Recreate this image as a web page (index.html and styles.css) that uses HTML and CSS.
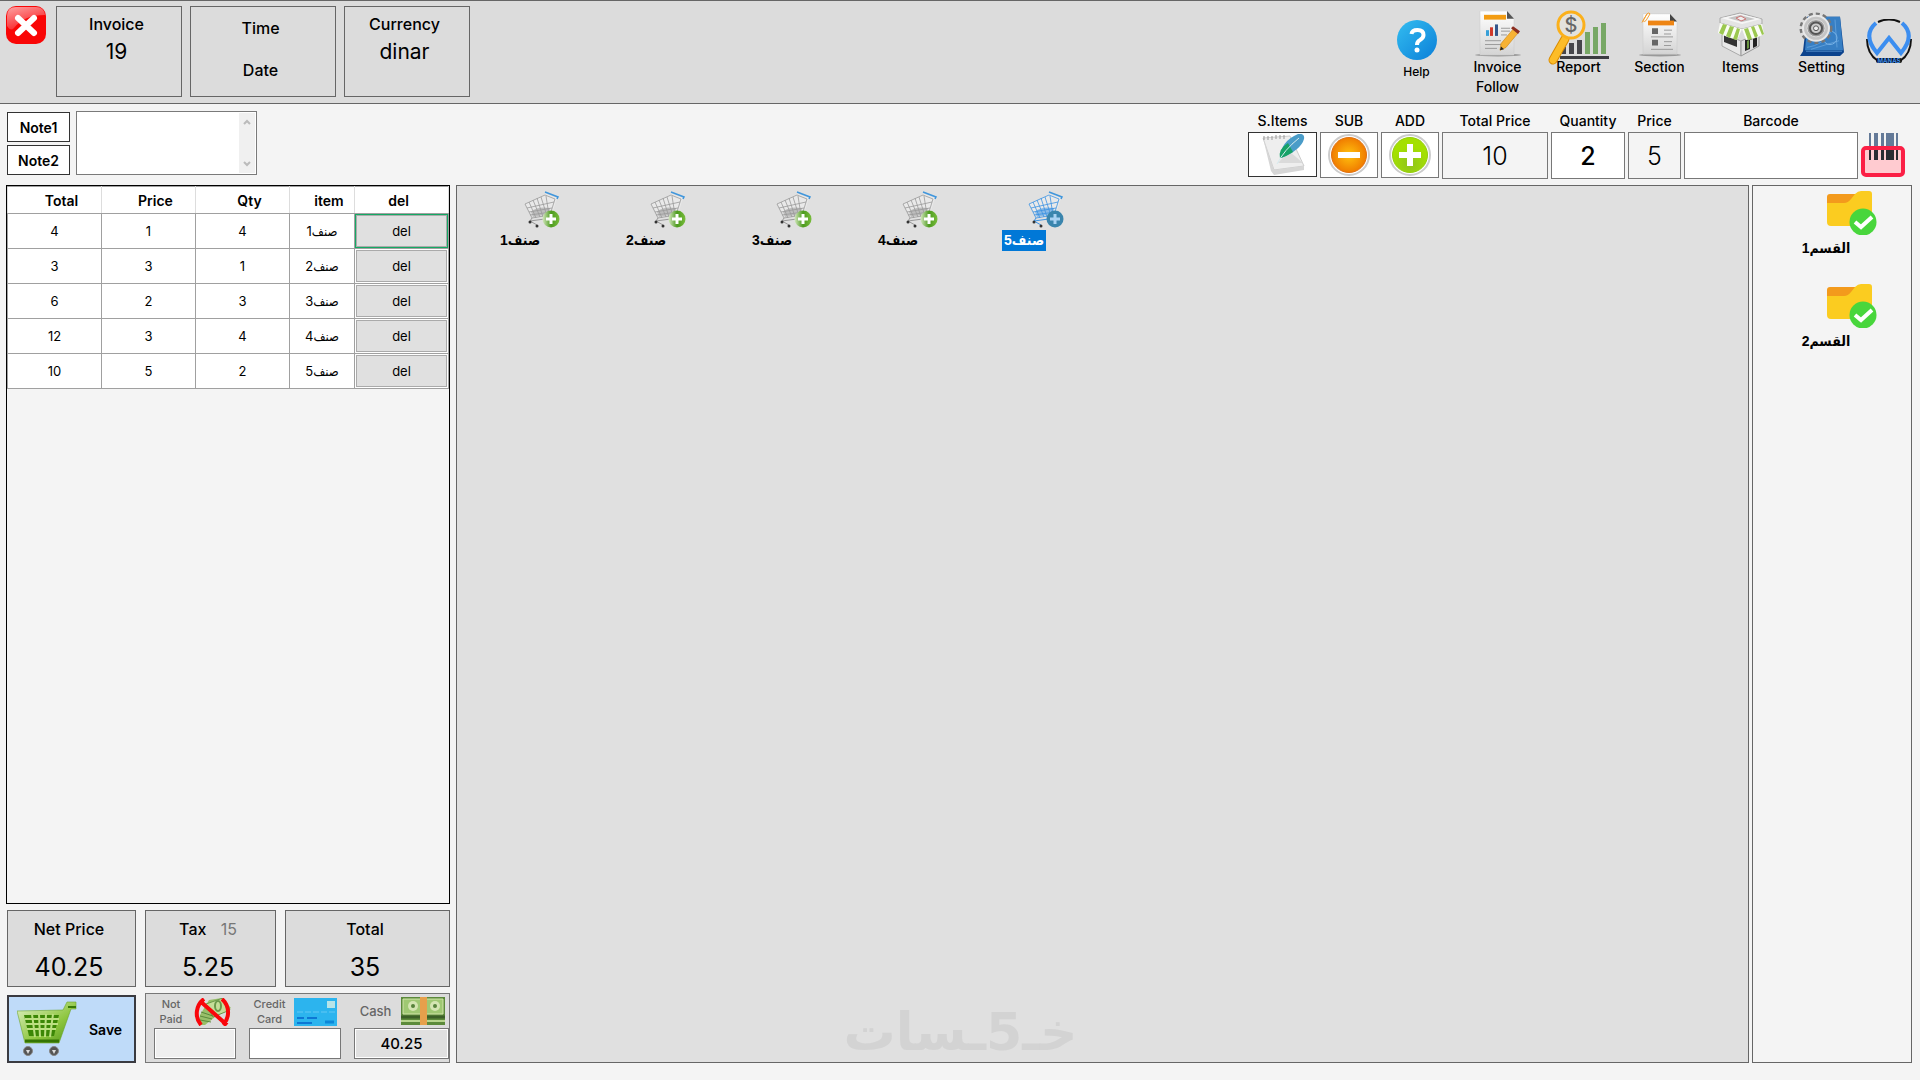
FILE: index.html
```
<!DOCTYPE html>
<html lang="en">
<head>
    <meta charset="UTF-8">
    <meta name="viewport" content="width=device-width, initial-scale=1.0">
    <title>Sales Invoice</title>
    <link rel="stylesheet" href="styles.css">
</head>
<body>
    <!-- shared gradients and icons -->
    <svg class="defs" width="0" height="0" aria-hidden="true">
        <defs>
            <linearGradient id="gloss" x1="0" y1="0" x2="0.5" y2="1">
                <stop offset="0" stop-color="#ffc9c9"/><stop offset="1" stop-color="#f8242a"/>
            </linearGradient>
            <linearGradient id="paper" x1="0" y1="0" x2="0" y2="1">
                <stop offset="0" stop-color="#fff"/><stop offset="1" stop-color="#d4d4d4"/>
            </linearGradient>
            <linearGradient id="blue" x1="0" y1="0" x2="1" y2="1">
                <stop offset="0" stop-color="#33bdf0"/><stop offset="1" stop-color="#0b7fd8"/>
            </linearGradient>
            <linearGradient id="green" x1="0" y1="0" x2="1" y2="1">
                <stop offset="0" stop-color="#e2f2c8"/><stop offset="0.6" stop-color="#8ec63f"/><stop offset="1" stop-color="#4e9416"/>
            </linearGradient>
            <linearGradient id="badge" x1="0" y1="0" x2="1" y2="0">
                <stop offset="0" stop-color="#d5e8c0"/><stop offset="0.5" stop-color="#4c9a1e"/><stop offset="1" stop-color="#79bd3c"/>
            </linearGradient>
            <radialGradient id="orangeBall"><stop offset="0" stop-color="#ffc20e"/><stop offset="1" stop-color="#f07c00"/></radialGradient>
            <radialGradient id="greenBall" cy="0.75"><stop offset="0" stop-color="#8fc31f"/><stop offset="1" stop-color="#a4e000"/></radialGradient>
            <symbol id="trolley" viewBox="0 0 36 38">
                <path d="M1 14 22 4 33 8 28 24 9 27z" fill="#fff" fill-opacity=".3"/>
                <path d="M1 14 21 5 31 9 26 25 8 28zM3 18 30 12M5 22 28 18M6 25 27 22M5 12 12 28M9 10 16 27M13 8 19 27M17 7 23 26M22 6 25 25" fill="none" stroke="currentColor" stroke-width=".8"/>
                <path d="M7 22c5-5 12-5 19-4l-1 6-16 3z" fill="currentColor" opacity=".55"/>
                <path d="M26 25 28 28 6 31M8 28 6 31 13 35" fill="none" stroke="currentColor"/>
                <circle cx="6" cy="32" r="1.5" fill="#333"/><circle cx="13" cy="36" r="1.5" fill="#333"/>
                <path d="M21 2 34 7 33 9" fill="none" stroke="#4096dc" stroke-width="1.5"/>
            </symbol>
            <symbol id="folder" viewBox="0 0 50 44">
                <path d="M0 6q0-3 3-3h25v12H0z" fill="#f39a1c"/>
                <path d="M0 12h17q4 0 7-4l4-5q3-3 6-3h8q3 0 3 3v28q0 4-4 4H4q-4 0-4-4z" fill="#fbcc20"/>
                <circle cx="36" cy="31" r="13.5" fill="#48d63c"/>
                <path d="m28 31 6 5 11-10" fill="none" stroke="#fff" stroke-width="4"/>
            </symbol>
        </defs>
    </svg>

    <header class="topbar">
        <button class="close-btn" aria-label="Close">
            <svg width="40" height="38" viewBox="0 0 40 38">
                <rect width="40" height="38" rx="10" fill="#f90606"/>
                <path d="M1 20V10Q1 1 10 1h20q8 0 9 8Q18 9 8 22q-3 4-7-2z" fill="url(#gloss)" opacity=".8"/>
                <path d="m12 12 16 15m0-15L12 27" stroke="#fff" stroke-width="6" stroke-linecap="round"/>
            </svg>
        </button>
        <div class="info-box">
            <span>Invoice</span>
            <strong>19</strong>
        </div>
        <div class="info-box info-time">
            <span>Time</span>
            <span>Date</span>
        </div>
        <div class="info-box">
            <span>Currency</span>
            <strong>dinar</strong>
        </div>

        <nav class="menu">
            <a href="#" class="menu-item menu-help">
                <svg width="40" height="40" viewBox="0 0 40 40">
                    <circle cx="20" cy="20" r="20" fill="url(#blue)"/>
                    <path d="M14.5 14q.5-4 6-4 6 0 6 5 0 3-3.500 5-3 1.500-3 5" fill="none" stroke="#fff" stroke-width="4"/>
                    <circle cx="20" cy="30" r="2.500" fill="#fff"/>
                </svg>
                Help
            </a>
            <a href="#" class="menu-item">
                <svg width="46" height="46" viewBox="0 0 46 48" preserveAspectRatio="none">
                    <ellipse cx="23" cy="46" rx="23" ry="1.500" fill="#999"/>
                    <path d="M5 0h27l7 8v38H5z" fill="url(#paper)" stroke="#ccc" stroke-width=".5"/>
                    <path d="M32 0v8h7z" fill="#555"/>
                    <path d="M9 4h22v5H9z" fill="#f39c12"/>
                    <path d="M11 20h3v6h-3z" fill="#38a0d8"/><path d="M15 17h3v9h-3z" fill="#d0392b"/><path d="M20 14h3v12h-3z" fill="#34568b"/>
                    <path d="M26 18h9M26 21h9M26 25h6M10 31h16M10 35h18M10 39h12" stroke="#999"/>
                    <path d="m26 34 12-15 5 4-12 15-6 3z" fill="#f7b234" stroke="#c98212" stroke-width=".6"/>
                    <path d="m36 18 2-2 7 5-2 3z" fill="#8b2d20"/><path d="m25 41 1-4 3 3z" fill="#222"/>
                </svg>
                Invoice Follow
            </a>
            <a href="#" class="menu-item">
                <svg width="61" height="46" viewBox="0 0 61 46" overflow="visible">
                    <path d="M12 45h49v3H12z" fill="#3d3d42"/>
                    <path d="M14 36h4v7h-4zM21 32h5v11h-5zM29 29h5v14h-5z" fill="#46464b"/>
                    <path d="M37 21h5v22h-5zM45 16h5v27h-5zM53 12h5v31h-5z" fill="#78a866"/>
                    <path d="M17 28 5 49" stroke="#d98b00" stroke-width="9" stroke-linecap="round"/>
                    <path d="M17 28 5 49" stroke="#fcbc28" stroke-width="7" stroke-linecap="round"/>
                    <circle cx="23" cy="14" r="13" fill="#e4e2dc" stroke="#fbb01b" stroke-width="3"/>
                    <text x="23" y="21" class="dollar">$</text>
                </svg>
                Report
            </a>
            <a href="#" class="menu-item">
                <svg width="42" height="46" viewBox="0 0 42 48" preserveAspectRatio="none">
                    <ellipse cx="21" cy="46" rx="21" ry="1.500" fill="#999"/>
                    <path d="M4 3h27l7 8v34H4z" fill="url(#paper)" stroke="#ccc" stroke-width=".5"/>
                    <path d="M31 3v8h7z" fill="#444"/>
                    <path d="M9 10h26v5H9z" fill="#ee8514"/>
                    <path d="M13 18h6v6h-6zM13 30h6v6h-6z" fill="#666"/>
                    <path d="M25 20h8M25 24h7M12 27h22M25 32h8M25 36h7M12 40h22" stroke="#999"/>
                    <path d="M3 12 8 3q2-2 3 0L7 10q-2 2-3 0l4-7" fill="none" stroke="#f5a030"/>
                </svg>
                Section
            </a>
            <a href="#" class="menu-item">
                <svg width="46" height="46" viewBox="0 0 46 46">
                    <path d="m4 22 19 8v15L4 35z" fill="#e8e8e8" stroke="#aaa"/>
                    <path d="m23 30 18-8v13L23 45z" fill="#ddd" stroke="#999"/>
                    <path d="m6 23 13 5v8L6 31z" fill="#333"/><path d="m27 29 12-5v11l-4 2v-9l-3 1v9l-5 2z" fill="#222"/><path d="m29 30 2-1v8l-2 1z" fill="#6a9640"/>
                    <path d="M2 7 22 2l22 6v5l-20 5L2 12z" fill="#e4e4e4" stroke="#aaa"/>
                    <path d="m3 7 19-4 21 5-19 5z" fill="#f6f6f6"/>
                    <path d="m10 7 12-3 15 4-13 3z" fill="#c4c4c4"/><path d="m18 7 5-2 5 3-5 2z" fill="#eee" stroke="#c77"/>
                    <path d="M2 12 24 18 19 29Q8 26 0 22zM24 18l20-5 2 10Q38 28 28 29z" fill="#fbfdf5"/>
                    <path d="M5 13 1 22l4 2 4-10zM12 15 8 25l4 2 4-11zM19 17l-4 11 4 1 3-11zM26 18l4 11 4-1-4-11zM33 16l4 11 3-2-4-10zM40 14l4 10 2-1-3-9z" fill="#9cc850"/>
                </svg>
                Items
            </a>
            <a href="#" class="menu-item">
                <svg width="46" height="46" viewBox="0 0 46 48" preserveAspectRatio="none">
                    <path d="M8 6h33l4 37-4 4H1l3-5z" fill="#0c438d"/>
                    <path d="M9 6h32l3 35H6z" fill="#377fc4"/>
                    <path d="M8 38q16-2 25-18M12 40l28-9M36 9l2 29M7 42h36" fill="none" stroke="#78b2e6" stroke-width=".6"/>
                    <circle cx="31" cy="28" r="7" fill="none" stroke="#78b2e6"/>
                    <circle cx="17" cy="18" r="15" fill="none" stroke="#777" stroke-width="3" stroke-dasharray="4 3"/>
                    <circle cx="17" cy="18" r="13" fill="#c4c4c4" stroke="#e8e8e8" stroke-width="2"/>
                    <circle cx="17" cy="18" r="9" fill="#999" stroke="#ddd"/>
                    <circle cx="17" cy="18" r="6" fill="#ccc" stroke="#555" stroke-width="2"/>
                    <circle cx="17" cy="18" r="2.500" fill="#eee" stroke="#555"/>
                </svg>
                Setting
            </a>
        </nav>
        <svg class="brand" width="46" height="46" viewBox="0 0 46 46" role="img" aria-label="Manas">
            <path d="M12 3q11-5 22 0M1 20q0 15 11 22M45 20q0 15-11 22" fill="none" stroke="#111" stroke-width="2"/>
            <path d="M10 4Q-4 16 11 34L23 19 35 34Q50 16 36 4" fill="none" stroke="#3c8ef0" stroke-width="4"/>
            <rect x="10" y="39" width="26" height="5" rx="2" fill="#111"/>
            <text x="23" y="44" class="brand-name">MANAS</text>
        </svg>
    </header>

    <section class="toolbar">
        <div class="notes">
            <div class="note-tabs">
                <button class="note-btn">Note1</button>
                <button class="note-btn">Note2</button>
            </div>
            <div class="note-box">
                <textarea class="note-text" aria-label="Note"></textarea>
                <span class="scrollbar">
                    <svg width="8" height="6" viewBox="0 0 8 6"><path d="m1 5 3-3 3 3"/></svg>
                    <svg width="8" height="6" viewBox="0 0 8 6"><path d="m1 1 3 3 3-3"/></svg>
                </span>
            </div>
        </div>

        <div class="fields">
            <div class="field field-search">
                <label for="search-items">S.Items</label>
                <button id="search-items" class="tool-btn tool-dark">
                    <svg width="46" height="42" viewBox="0 0 46 42">
                        <path d="m3 4 27-2 14 30-30 4z" fill="#eee" stroke="#ccc"/>
                        <path d="m3 4 11 32 30-4v4l-30 5-3-4z" fill="#d6d6d6"/>
                        <path d="M4 2v4m4-4v4m4-4v4m4-5v4m4-4v4m4-4v4" stroke="#999"/>
                        <path d="m18 29 25 0-14-12z" fill="#dadada"/>
                        <path d="M20 24Q21 7 38 0q7-1 6 5-3 11-23 19z" fill="#4a9cc8"/>
                        <path d="M20 24q-2-9 8-15l5 9q-6 4-12 6z" fill="#16a267"/>
                        <path d="M17 30Q24 16 39 4" fill="none" stroke="#d6ebef"/>
                    </svg>
                </button>
            </div>
            <div class="field field-step">
                <label for="sub">SUB</label>
                <button id="sub" class="tool-btn">
                    <svg width="42" height="42" viewBox="0 0 42 42">
                        <circle cx="21" cy="21" r="20" fill="#fff" stroke="#ccc" stroke-width="2"/>
                        <circle cx="21" cy="21" r="17.500" fill="url(#orangeBall)" stroke="#e07010"/>
                        <path d="M10 18h22v6H10z" fill="#fff"/>
                    </svg>
                </button>
            </div>
            <div class="field field-step">
                <label for="add">ADD</label>
                <button id="add" class="tool-btn">
                    <svg width="42" height="42" viewBox="0 0 42 42">
                        <circle cx="21" cy="21" r="20" fill="#fff" stroke="#ccc" stroke-width="2"/>
                        <circle cx="21" cy="21" r="17.500" fill="url(#greenBall)" stroke="#93ce0a"/>
                        <path d="M10 18h8v-8h6v8h8v6h-8v8h-6v-8h-8z" fill="#fff"/>
                    </svg>
                </button>
            </div>
            <div class="field field-total">
                <label for="total-price">Total Price</label>
                <input id="total-price" class="num" type="text" value="10" readonly>
            </div>
            <div class="field field-qty">
                <label for="quantity">Quantity</label>
                <input id="quantity" class="num num-edit" type="text" value="2">
            </div>
            <div class="field field-price">
                <label for="price">Price</label>
                <input id="price" class="num" type="text" value="5" readonly>
            </div>
            <div class="field field-barcode">
                <label for="barcode">Barcode</label>
                <input id="barcode" class="num num-edit" type="text">
            </div>
            <svg class="scan" width="44" height="44" viewBox="0 0 44 44" aria-hidden="true">
                <path d="M2 15h40v27H2z" fill="#ffcbd0"/>
                <path d="M8 0h2v17H8zm5 0h4v17h-4zm7 0h3v17h-3zm5 0h8v17h-8zm10 0h2v17h-2z" fill="#647a98"/>
                <path d="M8 17h2v10H8zm5 0h4v10h-4zm7 0h3v10h-3zm5 0h8v10h-8zm10 0h2v10h-2z" fill="#2b2b32"/>
                <rect x="2" y="15" width="40" height="27" rx="3" fill="none" stroke="#fb1f45" stroke-width="4"/>
            </svg>
        </div>
    </section>

    <main class="workspace">
        <aside class="invoice">
            <div class="lines">
                <table>
                    <thead>
                        <tr><th>Total</th><th>Price</th><th>Qty</th><th class="col-item">item</th><th class="col-del">del</th></tr>
                    </thead>
                    <tbody>
                        <tr><td>4</td><td>1</td><td>4</td><td>صنف1</td><td class="del-cell"><button class="del-btn current">del</button></td></tr>
                        <tr><td>3</td><td>3</td><td>1</td><td>صنف2</td><td class="del-cell"><button class="del-btn">del</button></td></tr>
                        <tr><td>6</td><td>2</td><td>3</td><td>صنف3</td><td class="del-cell"><button class="del-btn">del</button></td></tr>
                        <tr><td>12</td><td>3</td><td>4</td><td>صنف4</td><td class="del-cell"><button class="del-btn">del</button></td></tr>
                        <tr><td>10</td><td>5</td><td>2</td><td>صنف5</td><td class="del-cell"><button class="del-btn">del</button></td></tr>
                    </tbody>
                </table>
            </div>

            <div class="summary">
                <div class="sum-box">
                    <span>Net Price</span>
                    <strong>40.25</strong>
                </div>
                <div class="sum-box">
                    <span>Tax <em>15</em></span>
                    <strong>5.25</strong>
                </div>
                <div class="sum-box">
                    <span>Total</span>
                    <strong>35</strong>
                </div>

                <button class="save-btn">
                    <svg width="60" height="56" viewBox="0 0 60 56">
                        <path d="M0 10 46 9 50 1h9v7h-5L42 42H8z" fill="url(#green)" stroke="#6ca52c" stroke-width=".6"/>
                        <path d="M51 6h8" stroke="#397a06" stroke-width="2"/>
                        <path d="M7 14h35l-5 21H12z" fill="#3c8706"/>
                        <path d="M8 18h34M9 23h32M10 28h29M15 13l3 23m4-23 1 23m6-23-1 23m8-23-3 23" stroke="#bce082" stroke-width="2"/>
                        <path d="M8 40h34" stroke="#347404" stroke-width="3"/>
                        <circle cx="11" cy="50" r="4.500" fill="#555" stroke="#888"/><circle cx="37" cy="50" r="4.500" fill="#555" stroke="#888"/>
                        <path d="M9 49h4l-2 4zM35 49h4l-2 4z" fill="#ddd"/>
                    </svg>
                    Save
                </button>

                <div class="payments">
                    <div class="pay pay-none">
                        <label for="not-paid">Not Paid</label>
                        <svg width="40" height="28" viewBox="0 0 40 28">
                            <path d="m8 17 9-15L30 0l9 10-16 9-10 8H7z" fill="#98bf69"/>
                            <path d="m14 6 17-6 7 12-17 7z" fill="#c4dd99" stroke="#6b984a"/><ellipse cx="26" cy="8" rx="3" ry="5" fill="none" stroke="#6b984a" stroke-width="2"/>
                            <path d="m9 14 12 4M8 18l12 3M8 22l11 2" stroke="#5a8a3c"/>
                            <path d="M12 1a18 18 0 0 0-3 26M30 1a18 18 0 0 1 1 26M8 3l27 24" fill="none" stroke="#f9060b" stroke-width="4"/>
                        </svg>
                        <input id="not-paid" type="text" disabled>
                    </div>
                    <div class="pay pay-card">
                        <label for="credit-card">Credit Card</label>
                        <svg width="43" height="28" viewBox="0 0 43 28">
                            <path d="M0 0h43v28H0z" fill="#2cb4ee"/><path d="M33 3h8v7h-8z" fill="#b8e4e8"/>
                            <path d="M3 14h38" stroke="#62c8f4" stroke-dasharray="6 2"/>
                            <path d="M3 20h7m3 0h10M3 25h15" stroke="#0d77d4" stroke-width="2"/><path d="M31 24h9" stroke="#0c87d8" stroke-width="3"/>
                        </svg>
                        <input id="credit-card" type="text">
                    </div>
                    <div class="pay pay-cash">
                        <label for="cash">Cash</label>
                        <svg width="44" height="28" viewBox="0 0 44 28">
                            <path d="M0 0h44v28H0z" fill="#5c8a3b"/><path d="M2 2h40v15H2z" fill="#9fc873" stroke="#d1e5aa"/>
                            <circle cx="12" cy="9" r="5" fill="#d4e5b2"/><circle cx="34" cy="9" r="5" fill="#d4e5b2"/><circle cx="12" cy="9" r="2" fill="#56823b"/><circle cx="34" cy="9" r="2" fill="#56823b"/>
                            <path d="M0 20h44" stroke="#3c6028" stroke-width="3"/><path d="M0 24h44" stroke="#b6d48d" stroke-width="2"/>
                            <path d="M19 0h7v28h-7z" fill="#e6a04c"/>
                        </svg>
                        <input id="cash" type="text" value="40.25" readonly>
                    </div>
                </div>
            </div>
        </aside>

        <section class="products">
            <button class="product"><svg width="36" height="38"><use href="#trolley"/><circle cx="27" cy="29" r="8.500" fill="url(#badge)"/><path d="M27 24v10m-5-5h10" stroke="#fff" stroke-width="3"/></svg><span>صنف1</span></button>
            <button class="product"><svg width="36" height="38"><use href="#trolley"/><circle cx="27" cy="29" r="8.500" fill="url(#badge)"/><path d="M27 24v10m-5-5h10" stroke="#fff" stroke-width="3"/></svg><span>صنف2</span></button>
            <button class="product"><svg width="36" height="38"><use href="#trolley"/><circle cx="27" cy="29" r="8.500" fill="url(#badge)"/><path d="M27 24v10m-5-5h10" stroke="#fff" stroke-width="3"/></svg><span>صنف3</span></button>
            <button class="product"><svg width="36" height="38"><use href="#trolley"/><circle cx="27" cy="29" r="8.500" fill="url(#badge)"/><path d="M27 24v10m-5-5h10" stroke="#fff" stroke-width="3"/></svg><span>صنف4</span></button>
            <button class="product selected"><svg width="36" height="38"><use href="#trolley"/><circle cx="27" cy="29" r="8.500" fill="#3a85ad"/><path d="M27 24v10m-5-5h10" stroke="#a9d2f3" stroke-width="3"/></svg><span>صنف5</span></button>
            <div class="watermark" lang="ar">خـ5ـسات</div>
        </section>

        <section class="sections">
            <button class="section-btn"><svg width="50" height="44"><use href="#folder"/></svg><span>القسم1</span></button>
            <button class="section-btn"><svg width="50" height="44"><use href="#folder"/></svg><span>القسم2</span></button>
        </section>
    </main>
</body>
</html>
```

FILE: styles.css
```
* {
    box-sizing: border-box;
}

body {
    display: flex;
    flex-direction: column;
    min-height: 100vh;
    margin: 0;
    background-color: #f4f4f4;
    color: #000;
    font-family: Inter, "DejaVu Sans", sans-serif;
    font-size: 14px;
    font-weight: 500;
}

button, input, textarea {
    font: inherit;
    color: inherit;
    margin: 0;
    padding: 0;
    border-radius: 0;
}

button {
    cursor: pointer;
}

svg {
    display: block;
    flex-shrink: 0;
}

.defs {
    position: absolute;
}

/* top bar */
.topbar {
    display: flex;
    height: 104px;
    padding: 5px 8px 6px 6px;
    background-color: #dcdcdc;
    border-top: 1px solid #666;
    border-bottom: 1px solid #666;
}

.close-btn {
    align-self: flex-start;
    margin-right: 10px;
    background: none;
    border: none;
}

.info-box {
    display: flex;
    flex-direction: column;
    align-items: center;
    width: 126px;
    margin-right: 8px;
    padding: 7px 5px 0 0;
    border: 1px solid #666;
    font-size: 16px;
    line-height: 20px;
}

.info-box strong {
    font-size: 21px;
    font-weight: 400;
    line-height: 36px;
}

.info-time {
    width: 146px;
    padding-top: 11px;
    gap: 22px;
}

.menu {
    display: flex;
    margin-left: auto;
    padding-top: 5px;
}

.menu-item {
    display: flex;
    flex-direction: column;
    align-items: center;
    width: 81px;
    padding: 0 14px;
    color: #000;
    font-size: 14px;
    line-height: 20px;
    text-align: center;
    text-decoration: none;
}

.menu-help {
    gap: 2px;
    padding-top: 9px;
    font-size: 12px;
}

.brand {
    margin: 13px 0 0 4px;
}

.brand-name {
    fill: #3c8ef0;
    font-size: 6px;
    font-weight: 700;
    text-anchor: middle;
}

.dollar {
    fill: #666;
    font-size: 20px;
    text-anchor: middle;
}

/* notes and entry fields */
.toolbar {
    display: flex;
    justify-content: space-between;
    height: 81px;
    padding: 7px 15px 0 7px;
}

.notes {
    display: flex;
    gap: 6px;
}

.note-tabs {
    display: flex;
    flex-direction: column;
    gap: 3px;
    padding-top: 1px;
}

.note-btn {
    width: 63px;
    height: 30px;
    background-color: #fff;
    border: 1px solid #333;
    font-size: 14px;
    font-weight: 600;
}

.note-box {
    display: flex;
    width: 181px;
    height: 64px;
    padding: 1px;
    background-color: #fff;
    border: 1px solid #7a7a7a;
}

.note-text {
    flex: 1;
    min-width: 0;
    border: none;
    resize: none;
    overflow: hidden;
}

.scrollbar {
    display: flex;
    flex-direction: column;
    justify-content: space-between;
    align-items: center;
    width: 16px;
    padding: 6px 0;
    background-color: #f0f0f0;
}

.scrollbar path {
    fill: none;
    stroke: #bbb;
    stroke-width: 2;
}

.fields {
    display: flex;
    gap: 3px;
}

.field {
    display: flex;
    flex-direction: column;
    gap: 1px;
    font-size: 14px;
    line-height: 20px;
    text-align: center;
}

.field label {
    white-space: nowrap;
}

.field-search { width: 69px; }
.field-step { width: 58px; }
.field-total { width: 106px; }
.field-qty { width: 74px; }
.field-price { width: 53px; }
.field-barcode { width: 174px; }

.tool-btn {
    display: flex;
    justify-content: center;
    align-items: center;
    height: 46px;
    background-color: #fff;
    border: 1px solid #777;
}

.tool-dark {
    height: 45px;
    border-color: #333;
}

.num {
    width: 100%;
    height: 47px;
    background-color: #f4f4f4;
    border: 1px solid #777;
    font-size: 25px;
    font-weight: 300;
    text-align: center;
}

.num-edit {
    background-color: #fff;
    font-weight: 500;
}

.scan {
    margin-top: 22px;
}

/* three columns */
.workspace {
    display: grid;
    grid-template-columns: 444px 1fr 160px;
    flex: 1;
    padding: 0 8px 17px 6px;
}

.invoice {
    display: flex;
    flex-direction: column;
    gap: 6px;
}

.lines {
    flex: 1;
    border: 1px solid #000;
}

table {
    width: 100%;
    table-layout: fixed;
    border-collapse: collapse;
    background-color: #fff;
    font-size: 13px;
    font-weight: 400;
}

td {
    font-family: Inter, "DejaVu Sans Condensed", "DejaVu Sans", sans-serif;
}

th, td {
    padding: 0;
    border: 1px solid #a0a0a0;
    text-align: center;
}

th {
    height: 27px;
    padding-left: 14px;
    border-left-color: #ddd;
    border-right-color: #ddd;
    font-size: 14px;
    font-weight: 600;
}

td {
    height: 35px;
}

.col-item {
    width: 65px;
}

.col-del {
    width: 94px;
    padding: 0 6px 0 0;
}

.del-cell {
    padding: 1px;
}

.del-btn {
    display: block;
    width: 100%;
    height: 32px;
    background-color: #e0e0e0;
    border: 1px solid #aaa;
}

.del-btn.current {
    outline: 1px solid #14a964;
}

.summary {
    display: grid;
    grid-template-columns: 129px 131px 1fr;
    grid-template-rows: 77px 70px;
    column-gap: 9px;
    row-gap: 6px;
    padding-left: 1px;
}

.sum-box {
    display: flex;
    flex-direction: column;
    align-items: center;
    padding: 8px 5px 0 0;
    background-color: #dcdcdc;
    border: 1px solid #666;
    font-size: 16px;
    line-height: 20px;
}

.sum-box em {
    margin-left: 10px;
    color: #777;
    font-style: normal;
    font-weight: 400;
}

.sum-box strong {
    margin-top: 8px;
    font-size: 25px;
    font-weight: 400;
    line-height: 40px;
}

.save-btn {
    display: flex;
    align-items: center;
    gap: 12px;
    margin-top: 2px;
    padding-left: 8px;
    background-color: #bfdbf9;
    border: 2px solid #3a3a40;
    font-size: 14px;
    font-weight: 600;
}

.payments {
    display: flex;
    grid-column: span 2;
    justify-content: space-between;
    padding: 3px 0 3px 8px;
    background-color: #dcdcdc;
    border: 1px solid #777;
}

.pay {
    display: grid;
    grid-template-columns: 1fr auto;
    align-content: space-between;
    align-items: center;
    color: #666;
}

.pay label {
    padding-right: 4px;
    font-size: 11px;
    line-height: 15px;
    text-align: center;
}

.pay svg {
    margin-right: 4px;
}

.pay input {
    grid-column: span 2;
    width: 100%;
    height: 31px;
    background-color: #fff;
    border: 1px solid #777;
    color: #000;
    font-size: 15px;
    text-align: center;
}

.pay-none { width: 82px; }
.pay-card { width: 92px; }
.pay-cash { width: 95px; }

.pay-cash label {
    font-size: 13px;
}

.pay-none input,
.pay-cash input {
    background-color: #efefef;
    box-shadow: inset 0 0 0 1px #fff;
}

.pay-cash input {
    background-color: #e0e0e0;
}

.products {
    display: flex;
    flex-wrap: wrap;
    align-content: flex-start;
    position: relative;
    margin: 0 3px 0 6px;
    padding: 4px 22px;
    background-color: #e0e0e0;
    border: 1px solid #666;
}

.product,
.section-btn {
    display: flex;
    flex-direction: column;
    align-items: center;
    background: none;
    border: none;
    font-family: "Liberation Sans", "DejaVu Sans Condensed", "DejaVu Sans", sans-serif;
    font-size: 14px;
    font-weight: 700;
    line-height: 21px;
}

.product {
    gap: 2px;
    width: 126px;
    color: #999;
}

.product span {
    margin-right: 44px;
    padding: 0 2px;
    color: #000;
}

.selected {
    color: #3b92e2;
}

.product.selected span {
    background-color: #0078d7;
    color: #fff;
}

/* faint logo lying over the bottom of the product area */
.watermark {
    position: absolute;
    bottom: 0;
    left: 0;
    right: 284px;
    color: #d3d3d3;
    font-family: "DejaVu Sans", sans-serif;
    font-size: 52px;
    font-weight: 700;
    line-height: 60px;
    text-align: center;
    pointer-events: none;
}

.sections {
    display: flex;
    flex-direction: column;
    gap: 25px;
    padding: 5px 0 0 34px;
    border: 1px solid #666;
}

.section-btn {
    gap: 3px;
    width: 130px;
}

.section-btn span {
    margin-right: 52px;
}
```
